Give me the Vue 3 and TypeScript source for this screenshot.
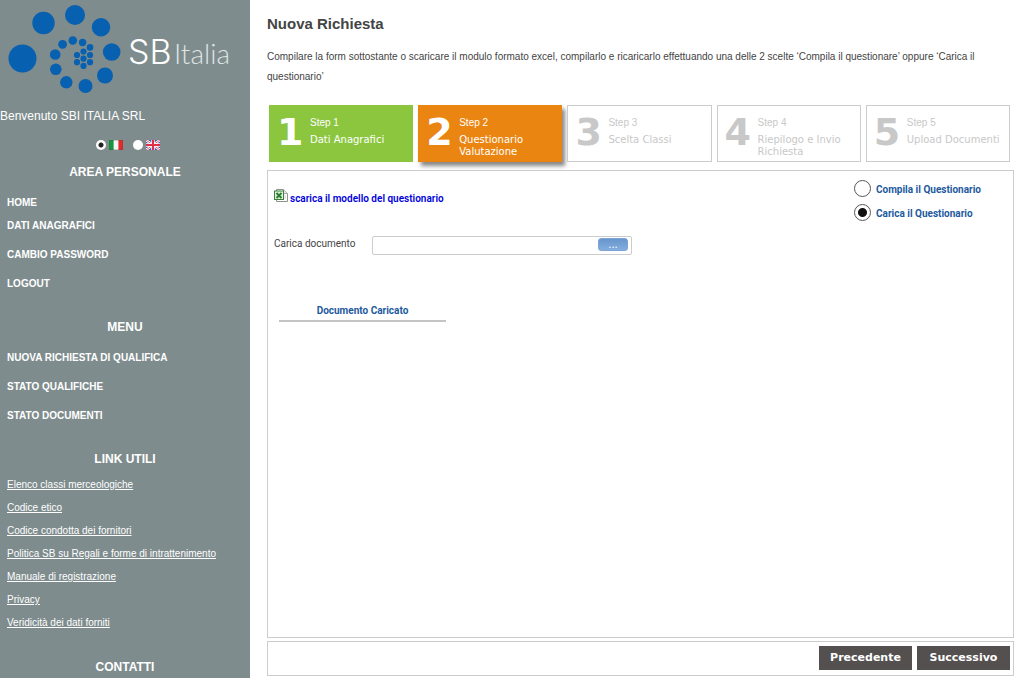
<script setup lang="ts">
import { ref } from 'vue'

interface Step {
  number: number
  title: string
  state: 'done' | 'current' | 'todo'
}

const language = ref('it')
const mode = ref('carica')
const fileName = ref('')

const personal: string[] = ['HOME', 'DATI ANAGRAFICI', 'CAMBIO PASSWORD', 'LOGOUT']
const menu: string[] = ['NUOVA RICHIESTA DI QUALIFICA', 'STATO QUALIFICHE', 'STATO DOCUMENTI']
const links: string[] = [
  'Elenco classi merceologiche',
  'Codice etico',
  'Codice condotta dei fornitori',
  'Politica SB su Regali e forme di intrattenimento',
  'Manuale di registrazione',
  'Privacy',
  'Veridicità dei dati forniti',
]
const steps: Step[] = [
  { number: 1, title: 'Dati Anagrafici', state: 'done' },
  { number: 2, title: 'Questionario Valutazione', state: 'current' },
  { number: 3, title: 'Scelta Classi', state: 'todo' },
  { number: 4, title: 'Riepilogo e Invio Richiesta', state: 'todo' },
  { number: 5, title: 'Upload Documenti', state: 'todo' },
]
const dots: [number, number, number][] = [
  [22.5, 58.5, 14], [43.5, 23, 11.2], [75, 15, 10], [101, 27.3, 9.2], [111.7, 52, 8.8],
  [105, 75.5, 8], [85.5, 86, 7], [66.3, 82.3, 6.2], [55.8, 69.3, 5.8], [55.2, 54.5, 5.3],
  [62.6, 44.3, 4.4], [72.8, 40.5, 4.3], [82.6, 42.5, 3.7], [90, 47.4, 3.3], [90, 55, 3.1],
  [90, 62.2, 3.1], [83.5, 51.5, 3.1], [83.5, 58.7, 3.1], [83.5, 65.9, 3.1], [77, 55, 3.1],
  [77, 62.2, 3.1],
]
</script>

<template>
  <div class="page">
    <aside class="sidebar">
      <svg class="logo" viewBox="0 0 250 100" role="img" aria-label="SB Italia">
        <circle v-for="(d, i) in dots" :key="i" :cx="d[0]" :cy="d[1]" :r="d[2]" fill="#0860b0" />
        <text x="128" y="64" class="logo-sb">SB</text>
        <text x="174" y="64" class="logo-italia">Italia</text>
      </svg>
      <p class="welcome">Benvenuto SBI ITALIA SRL</p>

      <div class="languages">
        <label>
          <input v-model="language" type="radio" name="language" value="it" aria-label="Italiano" />
          <svg class="flag" viewBox="0 0 14 10" aria-hidden="true">
            <rect width="14" height="10" fill="#f5f5f5" />
            <rect width="4.6" height="10" fill="#16963f" />
            <rect x="9.4" width="4.6" height="10" fill="#e22b2b" />
            <rect x="0.5" y="0.5" width="13" height="9" fill="none" stroke="#444" stroke-opacity=".25" />
          </svg>
        </label>
        <label>
          <input v-model="language" type="radio" name="language" value="en" aria-label="English" />
          <svg class="flag" viewBox="0 0 14 10" aria-hidden="true">
            <rect width="14" height="10" fill="#4757a5" />
            <path d="M0 0L14 10M14 0L0 10" stroke="#fff" stroke-width="2.4" />
            <path d="M0 0L14 10M14 0L0 10" stroke="#dc5066" stroke-width=".9" />
            <path d="M7 0V10M0 5H14" stroke="#fff" stroke-width="3.4" />
            <path d="M7 0V10M0 5H14" stroke="#e03048" stroke-width="2" />
          </svg>
        </label>
      </div>

      <h2>AREA PERSONALE</h2>
      <nav class="nav personal">
        <a v-for="item in personal" :key="item" href="#">{{ item }}</a>
      </nav>
      <h2>MENU</h2>
      <nav class="nav">
        <a v-for="item in menu" :key="item" href="#">{{ item }}</a>
      </nav>
      <h2>LINK UTILI</h2>
      <nav class="links">
        <a v-for="item in links" :key="item" href="#">{{ item }}</a>
      </nav>
      <h2>CONTATTI</h2>
    </aside>

    <main class="main">
      <h1>Nuova Richiesta</h1>
      <p class="intro">
        Compilare la form sottostante o scaricare il modulo formato excel, compilarlo e ricaricarlo
        effettuando una delle 2 scelte ‘Compila il questionare’ oppure ‘Carica il questionario’
      </p>

      <ol class="steps">
        <li v-for="s in steps" :key="s.number" class="step" :class="s.state">
          <span class="digit">{{ s.number }}</span>
          <span class="words">
            <span class="label">Step {{ s.number }}</span>
            <span class="title">{{ s.title }}</span>
          </span>
        </li>
      </ol>

      <section class="panel">
        <div class="top">
          <a class="download" href="#">
            <svg viewBox="0 0 14 14" aria-hidden="true">
              <path d="M2.5 .5H9.5L13.500 4.500V12.500H2.500Z" fill="#fff" stroke="#8b938b" />
              <path d="M9.500 .5V4.500H13.500" fill="#e8e8e8" stroke="#a3a8a3" />
              <path d="M10 7H12M10 9H12" stroke="#ccd4cc" />
              <rect x=".5" y="2" width="9" height="8.500" fill="#dff0da" stroke="#3c803c" />
              <path d="M2.500 4L7.500 9M7.500 4L2.500 9" stroke="#2a7a2e" stroke-width="1.800" />
            </svg>
            <span>scarica il modello del questionario</span>
          </a>
          <div class="modes">
            <label>
              <input v-model="mode" type="radio" name="mode" value="compila" />
              <span>Compila il Questionario</span>
            </label>
            <label>
              <input v-model="mode" type="radio" name="mode" value="carica" />
              <span>Carica il Questionario</span>
            </label>
          </div>
        </div>

        <div class="upload">
          <label for="document">Carica documento</label>
          <div class="file">
            <input id="document" v-model="fileName" type="text" />
            <button type="button" aria-label="Sfoglia">...</button>
          </div>
        </div>

        <table class="documents">
          <thead>
            <tr><th scope="col">Documento Caricato</th></tr>
          </thead>
        </table>
      </section>

      <footer class="actions">
        <button type="button">Precedente</button>
        <button type="button">Successivo</button>
      </footer>
    </main>
  </div>
</template>

<style>
body {
  margin: 0;
  background: #fff;
}
</style>

<style scoped>
* {
  box-sizing: border-box;
}
.page {
  display: flex;
  min-height: 100vh;
  font-family: "Liberation Sans", Arial, sans-serif;
}
.sidebar {
  flex: 0 0 250px;
  background: #7e8c8d;
  color: #fff;
}
.logo {
  display: block;
  width: 100%;
}
.logo-sb {
  font-family: Inter, "Liberation Sans", sans-serif;
  font-size: 34px;
  font-weight: 300;
  fill: #fff;
}
.logo-italia {
  font-family: Lato, "Liberation Sans", sans-serif;
  font-size: 28px;
  font-weight: 300;
  fill: #dfe4e4;
}
.welcome {
  margin: 8px 0 0;
  font-size: 12px;
  line-height: 16px;
}
.languages {
  display: flex;
  justify-content: center;
  gap: 10px;
  margin: 14px 0 12px;
  padding-left: 5px;
}
.languages label {
  display: flex;
  align-items: center;
  gap: 3px;
  height: 14px;
}
input[type="radio"] {
  appearance: none;
  flex: none;
  margin: 0;
  border-radius: 50%;
  background: #fff;
}
.languages input {
  width: 10px;
  height: 10px;
}
.languages input:checked {
  background: radial-gradient(circle, #222 2px, #fff 3px);
}
.flag {
  width: 14px;
  height: 10px;
}
h2 {
  margin: 0;
  font-size: 12px;
  line-height: 16px;
  text-align: center;
}
.nav {
  display: flex;
  flex-direction: column;
  padding: 8px 7px 20px;
}
.nav a {
  color: #fff;
  font-size: 10px;
  font-weight: bold;
  line-height: 29px;
  text-decoration: none;
}
.nav + h2 {
  padding-top: 1px;
}
.personal a:first-child {
  line-height: 30px;
  margin-bottom: -7px;
}
.links {
  display: flex;
  flex-direction: column;
  padding: 6px 7px 25px;
}
.links a {
  color: #fff;
  font-size: 10px;
  line-height: 23px;
}
.main {
  flex: 1;
  min-width: 0;
  display: flex;
  flex-direction: column;
  padding: 14px 10px 2px 17px;
  color: #444;
}
h1 {
  margin: 0;
  font-size: 15px;
  line-height: 20px;
}
.intro {
  margin: 13px 0 18px;
  font-size: 10px;
  line-height: 20px;
}
.steps {
  display: grid;
  grid-template-columns: repeat(5, 1fr);
  gap: 5px;
  margin: 0 4px 8px 2px;
  padding: 0;
  list-style: none;
}
.step {
  display: flex;
  gap: 8px;
  height: 57px;
  padding: 9px 5px 0 7px;
  border: 1px solid #ccc;
  color: #c8c8c8;
  background: #fff;
}
.done {
  background: #8cc63f;
  border-color: #8cc63f;
  color: #fff;
}
.current {
  background: #ea8511;
  border-color: #ea8511;
  color: #fff;
  box-shadow: 3px 4px 4px #888;
}
.digit {
  width: 25px;
  font: bold 38px/34px "DejaVu Sans", Verdana, sans-serif;
}
.words {
  display: flex;
  flex-direction: column;
}
.label {
  font-size: 10px;
  line-height: 16px;
}
.title {
  padding-top: 3px;
  font: 10px/12px "DejaVu Sans", Verdana, sans-serif;
}
.panel {
  flex: 1;
  padding: 9px 6px;
  border: 1px solid #ccc;
  font-family: Roboto, "Trebuchet MS", sans-serif;
  font-size: 10px;
}
.top {
  display: flex;
  justify-content: space-between;
}
.download {
  display: flex;
  gap: 2px;
  height: 24px;
  padding-top: 9px;
  color: #00d;
  font-weight: 600;
  text-decoration: none;
}
.download svg {
  width: 14px;
  height: 14px;
}
.download span {
  padding-top: 2px;
  line-height: 16px;
}
.modes {
  display: flex;
  flex-direction: column;
  gap: 7px;
  padding-right: 26px;
  color: #1c5a9e;
  font-weight: bold;
}
.modes label {
  display: flex;
  align-items: center;
  gap: 5px;
}
.modes span {
  padding-top: 2px;
}
.modes input {
  width: 17px;
  height: 17px;
  border: 1px solid #555;
}
.modes input:checked {
  background: radial-gradient(circle, #111 4px, #fff 5px);
}
.upload {
  display: flex;
  margin-top: 15px;
}
.upload > label {
  width: 98px;
  line-height: 16px;
}
.file {
  display: flex;
  width: 260px;
  height: 19px;
  border: 1px solid #ccc;
  border-radius: 2px;
}
.file input {
  flex: 1;
  min-width: 0;
  border: 0;
  padding: 0 4px;
  background: transparent;
}
.file button {
  width: 30px;
  height: 13px;
  margin: 1px 3px 0 0;
  padding: 0;
  border: 1px solid #7ca4d4;
  border-radius: 3px;
  background: linear-gradient(#6796ce, #83addd);
  color: #fff;
  font: 10px/10px "DejaVu Sans", Verdana, sans-serif;
}
.documents {
  width: 167px;
  margin: 48px 0 0 5px;
  border-collapse: collapse;
}
.documents th {
  padding: 0 0 1px;
  border-bottom: 2px solid #c4c4c4;
  color: #1c5a9e;
  line-height: 16px;
}
.actions {
  display: flex;
  justify-content: flex-end;
  gap: 5px;
  margin-top: 3px;
  padding: 4px 3px 5px;
  border: 1px solid #ccc;
}
.actions button {
  width: 93px;
  height: 24px;
  padding: 0;
  border: 0;
  background: #555050;
  color: #fff;
  font: bold 11px/24px "DejaVu Sans", Verdana, sans-serif;
}
</style>
